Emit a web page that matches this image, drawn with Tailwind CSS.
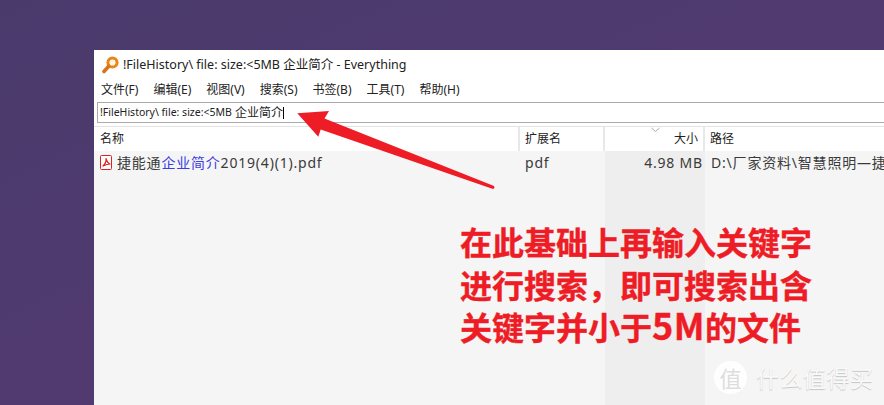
<!DOCTYPE html>
<html lang="zh-CN">
<head>
  <meta charset="UTF-8" />
  <title>Everything</title>
  <script src="https://cdn.jsdelivr.net/npm/@tailwindcss/browser@4"></script>
</head>
<body class="relative w-[884px] h-[405px] overflow-hidden bg-gradient-to-br from-[#4a3a6c] to-[#573a73] font-['Liberation_Sans','Noto_Sans_CJK_SC',sans-serif]">

  <!-- Window -->
  <div class="ml-[94px] mt-[50px] w-[790px] h-[355px] bg-white flex flex-col font-['Noto_Sans','Noto_Sans_CJK_SC',sans-serif] text-[#222]">
    <!-- Title -->
    <div class="h-[29px] flex items-center pl-[8px] pt-[2px] gap-[4px] text-[12.5px]">
      <svg class="-mt-[2px]" width="17" height="18" viewBox="0 0 17 18" fill="none">
        <circle cx="10.5" cy="6.5" r="4.6" stroke="#e8861c" stroke-width="3" fill="#fff6e4" />
        <path d="M6.5 10.5L2 15.5" stroke="#d9731a" stroke-width="3.6" stroke-linecap="round" />
      </svg>
      <span>!FileHistory\ file: size:&lt;5MB 企业简介 - Everything</span>
    </div>
    <!-- Menu -->
    <div class="h-[22px] flex items-center pl-[7px] gap-[15px] text-[12px]">
      <span>文件(F)</span><span>编辑(E)</span><span>视图(V)</span><span>搜索(S)</span><span>书签(B)</span><span>工具(T)</span><span>帮助(H)</span>
    </div>
    <!-- Search -->
    <div class="mt-[1px] ml-[3px] h-[21px] border border-r-0 border-[#ababab] flex items-center pl-[2px] text-[10.5px] leading-none">
      <span>!FileHistory\ file: size:&lt;5MB</span>
      <span class="ml-[3px] text-[12px] border-r border-black">企业简介</span>
    </div>
    <!-- Header -->
    <div class="mt-[3px] h-[25px] border-t border-[#e3e3e3] flex text-[12px] items-center">
      <div class="w-[426px] h-full border-r-2 border-[#e8e8e8] pl-[6px] flex items-center">名称</div>
      <div class="w-[85px] h-full border-r-2 border-[#e8e8e8] pl-[5px] flex items-center">扩展名</div>
      <div class="relative w-[100px] h-full border-r-2 border-[#e8e8e8] pr-[5px] flex items-center justify-end">
        <svg class="absolute left-[45px] top-0" width="11" height="6" viewBox="0 0 11 6" fill="none"><path d="M1.5 1L5.5 4.5L9.5 1" stroke="#aaa" /></svg>
        大小
      </div>
      <div class="flex-1 pl-[5px]">路径</div>
    </div>
    <!-- Rows -->
    <div class="flex-1 flex bg-[#f5f5f5] text-[#3a3a3a] text-[14px] tracking-[0.8px]">
      <div class="w-[426px] pl-[6px] pt-[1px]">
        <div class="flex items-center gap-[5px] h-[20px] whitespace-nowrap">
          <svg width="12" height="15" viewBox="0 0 12 15" fill="none">
            <rect x="0.5" y="0.5" width="11" height="14" rx="1" fill="#fff" stroke="#e02020" />
            <path d="M3 11C5 9 6.5 6 6 3.5C7 7 8 8.5 10 9C7.5 9 5 10 3 11Z" stroke="#e02020" stroke-width="1.2" stroke-linejoin="round" />
          </svg>
          <span>捷能通<span class="text-[#3d3de0]">企业简介</span>2019(4)(1).pdf</span>
        </div>
      </div>
      <div class="w-[85px] pl-[5px] pt-[1px] h-[21px] flex items-center">pdf</div>
      <div class="w-[100px] bg-[#eeeeee] pt-[1px] pr-[2px] text-right"><div class="h-[20px] flex items-center justify-end whitespace-nowrap">4.98 MB</div></div>
      <div class="flex-1 pl-[6px] pt-[1px] overflow-hidden"><div class="h-[20px] flex items-center whitespace-nowrap">D:\厂家资料\智慧照明—捷</div></div>
    </div>
  </div>

  <!-- Arrow annotation -->
  <svg class="absolute left-0 top-0" width="884" height="405" viewBox="0 0 884 405" fill="none">
    <path d="M297.3 113.3L329 111L324.5 118.5L494 186L494.5 188L493 189L320.7 129.5L318.3 136.7Z" fill="#ee1c25" />
  </svg>

  <!-- Red note -->
  <div class="absolute left-[460px] top-[220px] w-[370px] text-[#ee1c25] text-[32px] leading-[42.5px] font-bold font-['Noto_Sans_CJK_SC',sans-serif] whitespace-nowrap [-webkit-text-stroke:0.4px_#ee1c25]">
    <div class="h-[42.5px]">在此基础上再输入关键字</div>
    <div class="h-[42.5px]">进行搜索，即可搜索出含</div>
    <div class="h-[42.5px]">关键字并小于<span class="text-[36px] leading-[0] tracking-[0.5px]">5M</span>的文件</div>
  </div>

  <!-- Watermark -->
  <div class="absolute left-[714px] top-[360px] flex items-center gap-[9px] font-['Noto_Sans_CJK_SC',sans-serif]">
    <div class="w-[33px] h-[33px] rounded-full bg-white/90 flex items-center justify-center text-[22px] text-[#dddddd]">值</div>
    <div class="text-[23px] tracking-[0.5px] text-[#f9f9f9] [text-shadow:0_1px_1px_rgba(0,0,0,0.2)]">什么值得买</div>
  </div>
</body>
</html>
